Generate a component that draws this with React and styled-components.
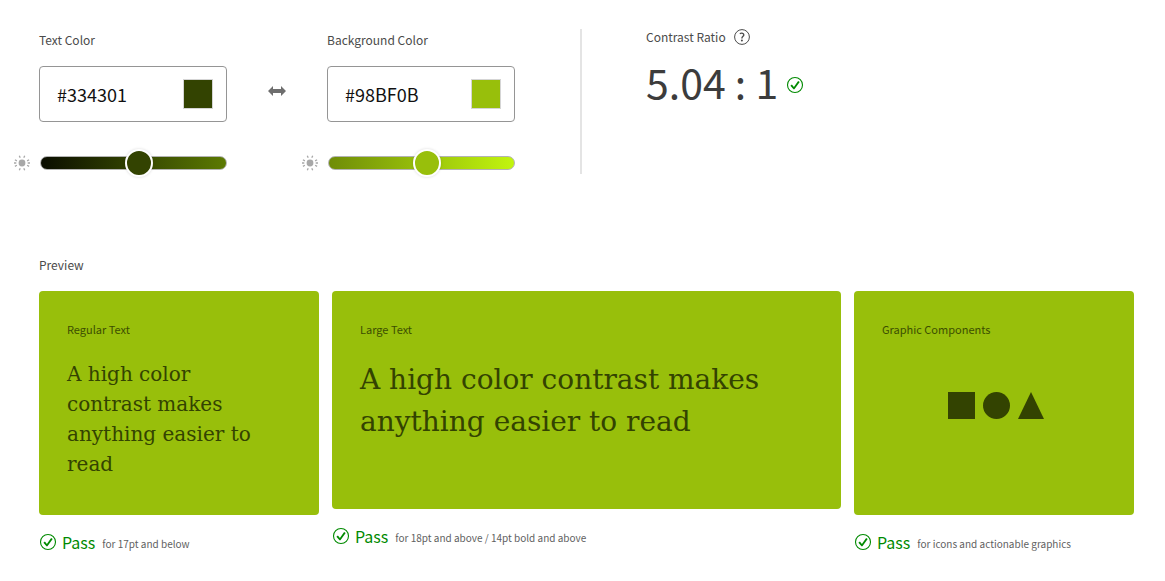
import React, { useState } from "react";
import styled, { createGlobalStyle } from "styled-components";

const GlobalStyle = createGlobalStyle`
  *, *::before, *::after { box-sizing: border-box; }
  body {
    margin: 0;
    background: #fff;
    color: #4b4b4b;
    font-family: "Noto Sans CJK JP", "Open Sans", sans-serif;
    font-size: 12px;
    line-height: 20px;
  }
`;

const Page = styled.main`
  padding: 28px 31px 24px 39px;
`;

const Checker = styled.section`
  display: flex;
  align-items: flex-start;
`;

const ColorColumn = styled.div`
  width: 188px;
  padding-top: 2px;
`;

const FieldLabel = styled.label`
  display: block;
  margin-bottom: 16px;
`;

const ColorField = styled.div`
  display: flex;
  align-items: center;
  height: 56px;
  padding: 0 13px 0 17px;
  border: 1px solid #959595;
  border-radius: 4px;
`;

const HexInput = styled.input`
  flex: 1;
  min-width: 0;
  padding: 0;
  border: 0;
  outline: 0;
  background: transparent;
  color: #111;
  font: inherit;
  font-size: 18px;
  line-height: 28px;
`;

const Swatch = styled.button`
  width: 30px;
  height: 30px;
  padding: 0;
  border: 1px solid #d5d5d5;
  background: ${(p) => p.$color};
`;

const SliderRow = styled.div`
  display: flex;
  align-items: center;
  gap: 10px;
  height: 28px;
  margin: 27px 0 0 -25px;
`;

const Slider = styled.input`
  appearance: none;
  flex: 1;
  min-width: 0;
  height: 14px;
  margin: 0;
  border: 1px solid #b3b3b3;
  border-radius: 7px;
  background: linear-gradient(to right, ${(p) => p.$from}, ${(p) => p.$to});

  &::-webkit-slider-thumb {
    appearance: none;
    width: 28px;
    height: 28px;
    border: 2px solid #fff;
    border-radius: 50%;
    background: ${(p) => p.$color};
    box-shadow: 0 0 3px rgba(0, 0, 0, 0.15);
  }
`;

const SwapButton = styled.button`
  display: flex;
  justify-content: center;
  width: 100px;
  margin-top: 53px;
  padding: 4px 0;
  border: 0;
  background: none;
`;

const RatioPanel = styled.div`
  min-height: 145px;
  margin: 1px 0 0 65px;
  padding-left: 64px;
  border-left: 2px solid #e4e4e4;
`;

const RatioHeading = styled.div`
  display: flex;
  align-items: center;
  gap: 8px;
  height: 16px;
`;

const HelpButton = styled.button`
  display: flex;
  padding: 0;
  border: 0;
  background: none;
`;

const RatioValue = styled.div`
  display: flex;
  align-items: flex-end;
  gap: 8px;
  height: 56px;
  margin-top: 8px;
  color: #3c3c3c;
  font-size: 41px;
  line-height: 56px;
`;

const RatioStatus = styled.span`
  display: flex;
  padding-bottom: 15px;
`;

const PreviewSection = styled.section`
  margin-top: 78px;
`;

const SectionTitle = styled.h2`
  margin: 0 0 16px;
  font-size: 12px;
  font-weight: 400;
  line-height: 20px;
`;

const PreviewGrid = styled.div`
  display: grid;
  grid-template-columns: 280fr 509fr 280fr;
  align-items: start;
  gap: 13px;
`;

const Card = styled.div`
  display: flex;
  flex-direction: column;
  min-height: ${(p) => (p.$large ? 218 : 224)}px;
  padding: 28px 28px 36px;
  border-radius: 4px;
  background: #98bf0b;
  color: #334301;
`;

const CardLabel = styled.div`
  font-size: 11px;
  line-height: 20px;
  opacity: 0.9;
`;

const Sample = styled.p`
  margin: 20px 0 0;
  padding-right: 16px;
  font-family: "DejaVu Serif", serif;
  font-size: ${(p) => (p.$large ? 28 : 20)}px;
  line-height: ${(p) => (p.$large ? 42 : 30)}px;
`;

const Shapes = styled.div`
  display: flex;
  justify-content: center;
  margin-top: 53px;
  padding-left: 4px;
`;

const Result = styled.div`
  display: flex;
  align-items: center;
  height: 24px;
  margin-top: 15px;
`;

const Verdict = styled.span`
  margin: 0 7px 0 5px;
  color: #008a00;
  font-size: 16px;
  line-height: 24px;
`;

const Hint = styled.span`
  padding-top: 4px;
  color: #5f5f5f;
  font-size: 10px;
  line-height: 20px;
`;

const CheckIcon = () => (
  <svg width="18" height="18" viewBox="0 0 18 18" aria-hidden="true">
    <circle cx="9" cy="9" r="7.5" fill="none" stroke="#008a00" strokeWidth="1.1" />
    <path d="M4.4 9.7 5.9 8.5 7.9 10.9 12.1 4.9 13.7 6 8.6 13.1Q8 13.8 7.3 13.1Z" fill="#008a00" />
  </svg>
);

const SunIcon = () => (
  <svg width="16" height="16" viewBox="0 0 16 16" aria-hidden="true">
    <circle cx="8" cy="8" r="3.4" fill="#a8a8a8" />
    <path
      d="M0 8h2.3M13.7 8H16M6.2 2.8 5.3.7M9.8 2.8l.9-2.1M6.2 13.2l-.9 2.1M9.8 13.2l.9 2.1M2.9 5.9.9 4.8M13.1 5.9l2-1.1M2.9 10.3.9 11.4M13.1 10.3l2 1.1"
      stroke="#a8a8a8"
      strokeWidth="1.3"
    />
  </svg>
);

const SwapIcon = () => (
  <svg width="18" height="12" viewBox="0 0 18 12" aria-hidden="true">
    <path d="M0 6 5 1V4h8V1L18 6l-5 5V8H5v3Z" fill="#6e6e6e" />
  </svg>
);

const HelpIcon = () => (
  <svg width="16" height="16" viewBox="0 0 16 16" aria-hidden="true">
    <circle cx="8" cy="8" r="7.4" fill="none" stroke="#4b4b4b" strokeWidth="1" />
    <path d="M5.8 4.7Q7.3 3.8 8.6 4.3C10.2 4.9 10 6.4 9 7.3 8.1 8 7.9 8.3 7.9 9.4" fill="none" stroke="#4b4b4b" strokeWidth="1.4" />
    <circle cx="7.9" cy="11.5" r="1" fill="#4b4b4b" />
  </svg>
);

function ColorPicker({ id, label, hex, from, to }) {
  const [value, setValue] = useState(hex);
  return (
    <ColorColumn>
      <FieldLabel htmlFor={id}>{label}</FieldLabel>
      <ColorField>
        <HexInput id={id} value={value} onChange={(e) => setValue(e.target.value)} />
        <Swatch type="button" $color={hex} aria-label={`Pick ${label}`} />
      </ColorField>
      <SliderRow>
        <SunIcon />
        <Slider type="range" max="200" defaultValue="107" aria-label={`${label} lightness`} $color={hex} $from={from} $to={to} />
      </SliderRow>
    </ColorColumn>
  );
}

function Preview({ label, hint, large, children }) {
  return (
    <div>
      <Card $large={large}>
        <CardLabel>{label}</CardLabel>
        {children}
      </Card>
      <Result>
        <CheckIcon />
        <Verdict>Pass</Verdict>
        <Hint>{hint}</Hint>
      </Result>
    </div>
  );
}

export default function App() {
  return (
    <Page>
      <GlobalStyle />
      <Checker>
        <ColorPicker id="text-color" label="Text Color" hex="#334301" from="#0a0d00" to="#5c7a02" />
        <SwapButton type="button" aria-label="Swap colors">
          <SwapIcon />
        </SwapButton>
        <ColorPicker id="background-color" label="Background Color" hex="#98BF0B" from="#6f8c08" to="#c2f50e" />
        <RatioPanel>
          <RatioHeading>
            Contrast Ratio
            <HelpButton type="button" aria-label="Help">
              <HelpIcon />
            </HelpButton>
          </RatioHeading>
          <RatioValue>
            5.04 : 1
            <RatioStatus>
              <CheckIcon />
            </RatioStatus>
          </RatioValue>
        </RatioPanel>
      </Checker>
      <PreviewSection>
        <SectionTitle>Preview</SectionTitle>
        <PreviewGrid>
          <Preview label="Regular Text" hint="for 17pt and below">
            <Sample>A high color contrast makes anything easier to read</Sample>
          </Preview>
          <Preview label="Large Text" hint="for 18pt and above / 14pt bold and above" large>
            <Sample $large>A high color contrast makes anything easier to read</Sample>
          </Preview>
          <Preview label="Graphic Components" hint="for icons and actionable graphics">
            <Shapes>
              <svg width="96" height="27" viewBox="0 0 96 27" fill="#334301" aria-hidden="true">
                <path d="M0 0h27v27H0z" />
                <circle cx="48.5" cy="13.5" r="13.5" />
                <path d="M83 0 96 27H70z" />
              </svg>
            </Shapes>
          </Preview>
        </PreviewGrid>
      </PreviewSection>
    </Page>
  );
}
